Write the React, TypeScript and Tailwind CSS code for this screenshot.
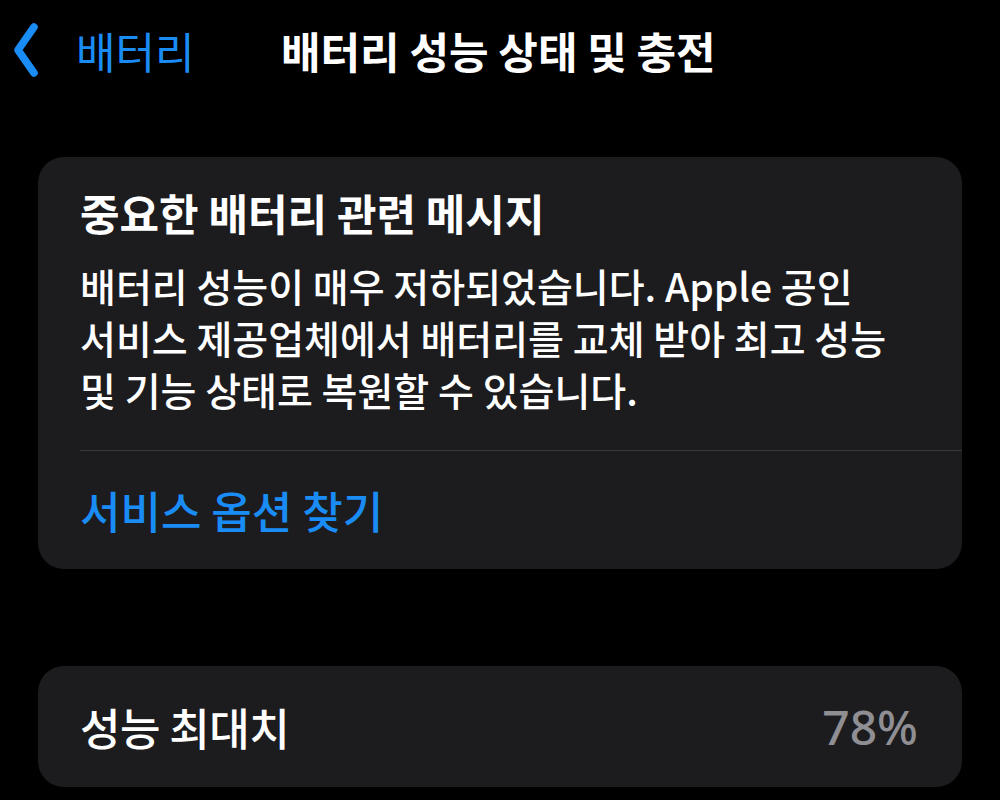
const font = { fontFamily: '"Noto Sans CJK KR", "Noto Sans", sans-serif' }

function Chevron() {
  return (
    <svg width="26" height="56" viewBox="0 0 26 56" className="shrink-0">
      <path d="M21 5 L5 28 L21 51" fill="none" stroke="#1a8cf5" strokeWidth="7.5" strokeLinecap="round" strokeLinejoin="round" />
    </svg>
  )
}

export default function App() {
  return (
    <div className="w-[1000px] h-[800px] bg-black overflow-hidden text-white" style={font}>
      <header className="flex items-center h-[100px] pl-[13px]">
        <div className="w-[268px] flex items-center shrink-0">
          <Chevron />
          <span className="ml-[37px] text-[43px] leading-none text-[#1a8cf5]">배터리</span>
        </div>
        <h1 className="text-[43px] leading-none font-semibold">배터리 성능 상태 및 충전</h1>
      </header>

      <section className="mx-[38px] mt-[57px] rounded-[26px] bg-[#1c1c1e] pt-[29px]">
        <div className="px-[42px]">
          <h2 className="text-[43px] leading-[52px] font-bold">중요한 배터리 관련 메시지</h2>
          <p className="mt-[21px] text-[39px] leading-[52px] font-medium">
            배터리 성능이 매우 저하되었습니다. Apple 공인<br />
            서비스 제공업체에서 배터리를 교체 받아 최고 성능<br />
            및 기능 상태로 복원할 수 있습니다.
          </p>
        </div>
        <div className="ml-[42px] mt-[35px] h-px bg-[#38383a]" />
        <div className="px-[42px] h-[118px] flex items-center">
          <span className="text-[44px] leading-none font-medium text-[#1a8cf5]">서비스 옵션 찾기</span>
        </div>
      </section>

      <section className="mx-[38px] mt-[97px] h-[121px] rounded-[26px] bg-[#1c1c1e] px-[42px] flex items-center justify-between">
        <span className="text-[44px] leading-none font-medium tracking-[-0.5px]">성능 최대치</span>
        <span className="text-[48px] leading-none font-medium text-[#8e8e93] mr-[2px]" style={{ fontFamily: '"Noto Sans", sans-serif' }}>78%</span>
      </section>
    </div>
  )
}
